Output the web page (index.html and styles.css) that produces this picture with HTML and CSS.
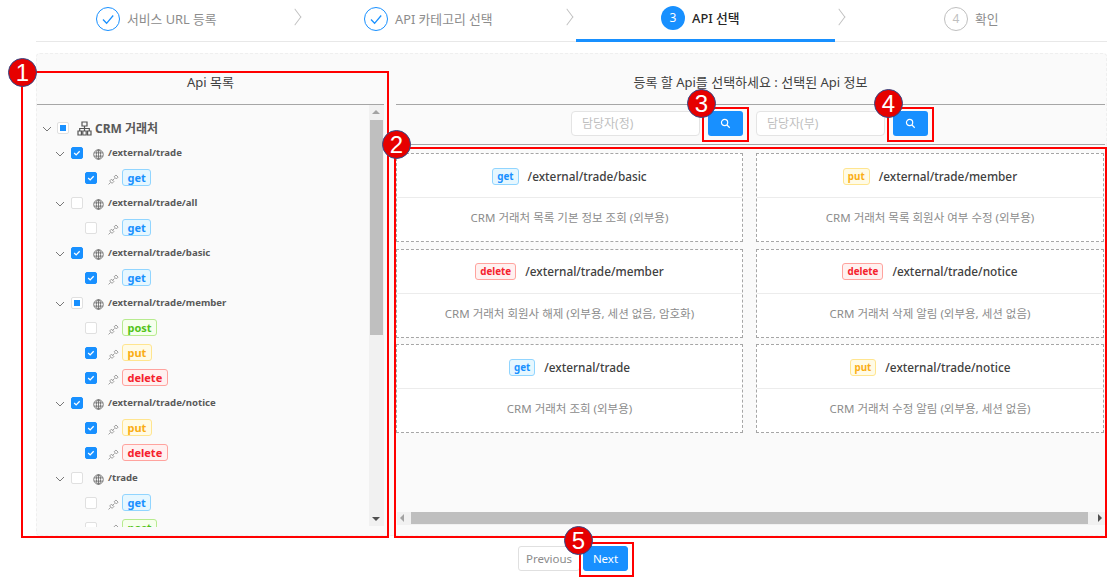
FILE: index.html
```html
<!DOCTYPE html>
<html lang="ko">
  <head>
    <meta charset="UTF-8" />
    <title>API 선택</title>
    <link rel="stylesheet" href="styles.css">
  </head>
  <body>
    <svg class="defs" width="0" height="0">
      <symbol id="i-check" viewBox="0 0 24 24"><path d="M7 12.5l3.6 3.8L17.2 8.5" fill="none" stroke="currentColor" stroke-width="1.3"/></symbol>
      <symbol id="i-arrow" viewBox="0 0 10 10"><path d="M1 3l4 4 4-4" fill="none" stroke="#777" stroke-width="1"/></symbol>
      <symbol id="i-tick" viewBox="0 0 12 12"><path d="M2.6 6l2.4 2.3 4.2-4.4" fill="none" stroke="#fff" stroke-width="1.6"/></symbol>
      <symbol id="i-tree" viewBox="0 0 15 15"><path d="M5 1h5v4H5zM1 10h3.4v4H1zM5.8 10h3.4v4H5.8zM10.6 10H14v4h-3.4zM7.5 5v5M2.7 10V7.5h9.6V10" fill="none" stroke="#555" stroke-width="1.2"/></symbol>
      <symbol id="i-globe" viewBox="0 0 12 12"><g fill="none" stroke="#666" stroke-width=".9"><circle cx="6" cy="6" r="5.2"/><ellipse cx="6" cy="6" rx="2.3" ry="5.2"/><path d="M6 1v10M1.2 4.2h9.6M1.2 7.8h9.6"/></g></symbol>
      <symbol id="i-link" viewBox="0 0 12 12"><g fill="none" stroke="#8a8a8a" stroke-width=".9" stroke-linejoin="round"><path d="M6.7 3l2-1.9 2.3 2.3-1.9 2z"/><path d="M1.8 7.6l2-2 2.6 2.6-2 2z"/><path d="M4.8 7.2l2.4-2.4M.6 11.4l2.2-2.2"/></g></symbol>
      <symbol id="i-search" viewBox="0 0 12 12"><circle cx="5" cy="5" r="3.4" fill="none" stroke="#fff" stroke-width="1.3"/><path d="M7.6 7.6l3 3" stroke="#fff" stroke-width="1.3"/></symbol>
    </svg>

    <div class="steps">
      <div class="step step-one">
        <span class="step-icon done"><svg><use href="#i-check"/></svg></span>
        <span class="step-label">서비스 URL 등록</span>
      </div>
      <span class="chev"></span>
      <div class="step step-two">
        <span class="step-icon done"><svg><use href="#i-check"/></svg></span>
        <span class="step-label">API 카테고리 선택</span>
      </div>
      <span class="chev"></span>
      <div class="step step-three active">
        <span class="step-icon current">3</span>
        <span class="step-label">API 선택</span>
      </div>
      <span class="chev"></span>
      <div class="step step-four">
        <span class="step-icon todo">4</span>
        <span class="step-label">확인</span>
      </div>
    </div>

    <div class="panel">
      <div class="col-left">
        <div class="col-title">Api 목록</div>
        <div class="tree-wrap">
          <div class="tree">
            <div class="row root"><svg class="arrow"><use href="#i-arrow"/></svg><span class="cb part"></span><svg class="ico-tree"><use href="#i-tree"/></svg><b>CRM 거래처</b></div>

            <div class="row lv1"><svg class="arrow"><use href="#i-arrow"/></svg><span class="cb on"><svg><use href="#i-tick"/></svg></span><svg class="ico-globe"><use href="#i-globe"/></svg><b>/external/trade</b></div>
            <div class="row lv2"><span class="cb on"><svg><use href="#i-tick"/></svg></span><svg class="ico-link"><use href="#i-link"/></svg><span class="tag get">get</span></div>

            <div class="row lv1"><svg class="arrow"><use href="#i-arrow"/></svg><span class="cb"></span><svg class="ico-globe"><use href="#i-globe"/></svg><b>/external/trade/all</b></div>
            <div class="row lv2"><span class="cb"></span><svg class="ico-link"><use href="#i-link"/></svg><span class="tag get">get</span></div>

            <div class="row lv1"><svg class="arrow"><use href="#i-arrow"/></svg><span class="cb on"><svg><use href="#i-tick"/></svg></span><svg class="ico-globe"><use href="#i-globe"/></svg><b>/external/trade/basic</b></div>
            <div class="row lv2"><span class="cb on"><svg><use href="#i-tick"/></svg></span><svg class="ico-link"><use href="#i-link"/></svg><span class="tag get">get</span></div>

            <div class="row lv1"><svg class="arrow"><use href="#i-arrow"/></svg><span class="cb part"></span><svg class="ico-globe"><use href="#i-globe"/></svg><b>/external/trade/member</b></div>
            <div class="row lv2"><span class="cb"></span><svg class="ico-link"><use href="#i-link"/></svg><span class="tag post">post</span></div>
            <div class="row lv2"><span class="cb on"><svg><use href="#i-tick"/></svg></span><svg class="ico-link"><use href="#i-link"/></svg><span class="tag put">put</span></div>
            <div class="row lv2"><span class="cb on"><svg><use href="#i-tick"/></svg></span><svg class="ico-link"><use href="#i-link"/></svg><span class="tag delete">delete</span></div>

            <div class="row lv1"><svg class="arrow"><use href="#i-arrow"/></svg><span class="cb on"><svg><use href="#i-tick"/></svg></span><svg class="ico-globe"><use href="#i-globe"/></svg><b>/external/trade/notice</b></div>
            <div class="row lv2"><span class="cb on"><svg><use href="#i-tick"/></svg></span><svg class="ico-link"><use href="#i-link"/></svg><span class="tag put">put</span></div>
            <div class="row lv2"><span class="cb on"><svg><use href="#i-tick"/></svg></span><svg class="ico-link"><use href="#i-link"/></svg><span class="tag delete">delete</span></div>

            <div class="row lv1"><svg class="arrow"><use href="#i-arrow"/></svg><span class="cb"></span><svg class="ico-globe"><use href="#i-globe"/></svg><b>/trade</b></div>
            <div class="row lv2"><span class="cb"></span><svg class="ico-link"><use href="#i-link"/></svg><span class="tag get">get</span></div>
            <div class="row lv2"><span class="cb"></span><svg class="ico-link"><use href="#i-link"/></svg><span class="tag post">post</span></div>
          </div>
          <div class="vbar">
            <span class="tri tri-up"></span>
            <span class="vthumb"></span>
            <span class="tri tri-down"></span>
          </div>
        </div>
      </div>

      <div class="col-right">
        <div class="col-title">등록 할 Api를 선택하세요 : 선택된 Api 정보</div>
        <div class="search-row">
          <div class="search">
            <input class="search-input" placeholder="담당자(정)" />
            <button class="search-btn"><svg><use href="#i-search"/></svg></button>
          </div>
          <div class="search">
            <input class="search-input" placeholder="담당자(부)" />
            <button class="search-btn"><svg><use href="#i-search"/></svg></button>
          </div>
        </div>
        <div class="cards">
          <div class="card">
            <div class="card-head"><span class="tag get">get</span>/external/trade/basic</div>
            <div class="card-body">CRM 거래처 목록 기본 정보 조회 (외부용)</div>
          </div>
          <div class="card">
            <div class="card-head"><span class="tag put">put</span>/external/trade/member</div>
            <div class="card-body">CRM 거래처 목록 회원사 여부 수정 (외부용)</div>
          </div>
          <div class="card">
            <div class="card-head"><span class="tag delete">delete</span>/external/trade/member</div>
            <div class="card-body">CRM 거래처 회원사 해제 (외부용, 세션 없음, 암호화)</div>
          </div>
          <div class="card">
            <div class="card-head"><span class="tag delete">delete</span>/external/trade/notice</div>
            <div class="card-body">CRM 거래처 삭제 알림 (외부용, 세션 없음)</div>
          </div>
          <div class="card">
            <div class="card-head"><span class="tag get">get</span>/external/trade</div>
            <div class="card-body">CRM 거래처 조회 (외부용)</div>
          </div>
          <div class="card">
            <div class="card-head"><span class="tag put">put</span>/external/trade/notice</div>
            <div class="card-body">CRM 거래처 수정 알림 (외부용, 세션 없음)</div>
          </div>
        </div>
        <div class="hbar">
          <span class="tri tri-left"></span>
          <span class="hthumb"></span>
          <span class="tri tri-right"></span>
        </div>
      </div>
    </div>

    <div class="actions">
      <button class="btn">Previous</button>
      <button class="btn primary">Next</button>
    </div>

    <div class="mark mark-1"></div>
    <div class="mark mark-2"></div>
    <div class="mark mark-3"></div>
    <div class="mark mark-4"></div>
    <div class="mark mark-5"></div>
    <span class="badge badge-1">1</span>
    <span class="badge badge-2">2</span>
    <span class="badge badge-3">3</span>
    <span class="badge badge-4">4</span>
    <span class="badge badge-5">5</span>
  </body>
</html>
```

FILE: styles.css
```css
* {
  box-sizing: border-box;
}
html,
body {
  margin: 0;
  height: 581px;
  overflow: hidden;
}
body {
  position: relative;
  background: #fff;
  font-family: "Noto Sans", "Noto Sans CJK KR", sans-serif;
  font-size: 12px;
  color: #595959;
}
.defs {
  position: absolute;
}

/* steps */
.steps {
  display: flex;
  align-items: stretch;
  height: 42px;
  margin-left: 36px;
  width: 1071px;
  border-bottom: 1px solid #e8e8e8;
}
.step {
  display: flex;
  align-items: center;
  gap: 7px;
  height: 41px;
  padding-bottom: 4px;
  font-size: 12.8px;
  color: #8c8c8c;
}
.step-one {
  width: 255px;
  padding-left: 60px;
}
.step-two {
  width: 259px;
  padding-left: 60px;
}
.step-three {
  width: 259px;
  padding-left: 85px;
}
.step-four {
  width: 259px;
  padding-left: 96px;
}
.step.active {
  color: #262626;
  font-weight: 500;
  height: 42px;
  border-bottom: 3px solid #1890ff;
}
.step-icon {
  display: flex;
  align-items: center;
  justify-content: center;
  width: 24px;
  height: 24px;
  border-radius: 50%;
  font-size: 12px;
  font-weight: 400;
}
.step-icon svg {
  width: 24px;
  height: 24px;
}
.done {
  border: 1px solid #1890ff;
  color: #1890ff;
}
.done svg {
  flex: none;
}
.current {
  background: #1890ff;
  color: #fff;
}
.todo {
  border: 1px solid #bfbfbf;
  color: #bfbfbf;
}
.chev {
  flex: none;
  width: 13px;
  position: relative;
}
.chev::before {
  content: "";
  position: absolute;
  left: -2px;
  top: 11px;
  width: 11px;
  height: 11px;
  border-top: 1px solid #bfbfbf;
  border-right: 1px solid #bfbfbf;
  transform: scaleX(0.75) rotate(45deg);
}

/* main panel */
.panel {
  display: flex;
  gap: 12px;
  width: 1071px;
  height: 483px;
  margin: 11px 0 0 36px;
  background: #fafafa;
  border: 1px dashed #efefef;
  border-radius: 4px;
}
.col-left {
  width: 347px;
  flex: none;
}
.col-right {
  width: 709px;
  flex: none;
}
.col-title {
  height: 51px;
  padding-top: 19px;
  line-height: 18px;
  text-align: center;
  color: #404040;
  font-size: 13px;
  border-bottom: 1px solid #a6a6a6;
}

/* tree */
.tree-wrap {
  display: flex;
  height: 422px;
}
.tree {
  flex: 1;
  height: 422px;
  overflow: hidden;
  padding-top: 10px;
}
.row {
  display: flex;
  align-items: center;
  height: 25px;
}
.row b {
  font-size: 9.6px;
  font-weight: 700;
  color: #595959;
  margin-left: 4px;
}
.root b {
  font-size: 12px;
  margin-left: 3px;
}
.root {
  padding-left: 5px;
}
.lv1 {
  padding-left: 18px;
}
.lv2 {
  padding-left: 48px;
}
.arrow {
  width: 10px;
  height: 10px;
  flex: none;
  margin-top: 3px;
  margin-right: 5px;
}
.lv1 .arrow {
  margin-right: 6px;
}
.cb {
  display: flex;
  align-items: center;
  justify-content: center;
  flex: none;
  width: 12px;
  height: 12px;
  background: #fff;
  border: 1px solid #e0e0e0;
  border-radius: 2px;
}
.cb svg {
  width: 12px;
  height: 12px;
}
.cb.on {
  background: #1890ff;
  border-color: #1890ff;
}
.cb.part::after {
  content: "";
  width: 6px;
  height: 6px;
  background: #1890ff;
}
.ico-tree {
  flex: none;
  width: 15px;
  height: 15px;
  margin-left: 8px;
  margin-top: 2px;
}
.ico-globe {
  flex: none;
  width: 11px;
  height: 11px;
  margin-left: 10px;
  margin-top: 4px;
}
.ico-link {
  flex: none;
  width: 11px;
  height: 11px;
  margin-left: 11px;
  margin-top: 4px;
  margin-right: 3px;
}
.tag {
  display: inline-block;
  height: 17px;
  padding: 0 4.5px;
  line-height: 15px;
  font-size: 11px;
  font-weight: 700;
  border: 1px solid;
  border-radius: 3px;
}
.get {
  color: #1890ff;
  background: #e6f7ff;
  border-color: #91d5ff;
}
.put {
  color: #faad14;
  background: #fffbe6;
  border-color: #ffe58f;
}
.post {
  color: #52c41a;
  background: #f6ffed;
  border-color: #b7eb8f;
}
.delete {
  color: #f5222d;
  background: #fff1f0;
  border-color: #ffa39e;
}

/* scroll bars */
.vbar {
  position: relative;
  flex: none;
  width: 15px;
  height: 421px;
  background: #f1f1f1;
}
.vthumb {
  position: absolute;
  left: 1px;
  top: 15px;
  width: 13px;
  height: 215px;
  background: #bfbfbf;
}
.tri {
  position: absolute;
  width: 0;
  height: 0;
  border: 4px solid transparent;
}
.tri-up {
  left: 3px;
  top: 1px;
  border-bottom-color: #a3a3a3;
}
.tri-down {
  left: 3px;
  bottom: 1px;
  border-top-color: #505050;
}
.hbar {
  position: relative;
  height: 13px;
  margin: 79px 0 0 1px;
  background: #f1f1f1;
}
.hthumb {
  position: absolute;
  left: 14px;
  top: 0;
  width: 677px;
  height: 12px;
  background: #bfbfbf;
}
.tri-left {
  left: -1px;
  top: 2px;
  border-right-color: #a3a3a3;
}
.tri-right {
  right: -1px;
  top: 2px;
  border-left-color: #505050;
}

/* search */
.search-row {
  display: flex;
  justify-content: flex-start;
  gap: 13px;
  height: 40px;
  padding: 6px 0 0 175px;
  border-bottom: 1px solid #a6a6a6;
}
.search {
  display: flex;
  gap: 8px;
}
.search-input {
  width: 129px;
  height: 25px;
  padding: 0 10px;
  background: #fff;
  border: 1px solid #e4e4e4;
  border-radius: 4px;
  font: 12px "Noto Sans", "Noto Sans CJK KR", sans-serif;
}
.search-input::placeholder {
  color: #bfbfbf;
}
.search-btn {
  display: flex;
  align-items: center;
  justify-content: center;
  width: 35px;
  height: 25px;
  padding: 0;
  background: #1890ff;
  border: none;
  border-radius: 3px;
}
.search-btn svg {
  width: 11px;
  height: 11px;
}

/* cards */
.cards {
  display: grid;
  grid-template-columns: 347px 348px;
  grid-auto-rows: 89px;
  column-gap: 13px;
  row-gap: 6.6px;
  margin-top: 8px;
}
.card {
  background: #fff;
  border: 1px dashed #a6a6a6;
}
.card-head {
  display: flex;
  align-items: center;
  justify-content: center;
  gap: 9px;
  height: 44px;
  border-bottom: 1px solid #ececec;
  font-size: 11.8px;
  font-weight: 500;
  color: #404040;
}
.card-head .tag {
  font-size: 9.8px;
  margin-top: 1px;
  padding: 0 4px;
}
.card-body {
  height: 39px;
  line-height: 39px;
  text-align: center;
  font-size: 11.5px;
  color: #8c8c8c;
}

/* bottom buttons */
.actions {
  display: flex;
  justify-content: center;
  gap: 3px;
  margin-top: 10px;
  padding-left: 34px;
}
.btn {
  height: 25px;
  padding: 0;
  width: 62px;
  background: #fff;
  border: 1px solid #e0e0e0;
  border-radius: 3px;
  font: 11.5px "Noto Sans", "Noto Sans CJK KR", sans-serif;
  color: #8c8c8c;
}
.primary {
  width: 45px;
  background: #1890ff;
  border-color: #1890ff;
  color: #fff;
}

/* red annotation overlays */
.mark {
  position: absolute;
  border: 2px solid #f00;
}
.mark-1 {
  left: 21px;
  top: 71px;
  width: 368px;
  height: 467px;
}
.mark-2 {
  left: 394px;
  top: 147px;
  width: 713px;
  height: 391px;
}
.mark-3 {
  left: 702px;
  top: 107px;
  width: 47px;
  height: 35px;
}
.mark-4 {
  left: 887px;
  top: 107px;
  width: 47px;
  height: 35px;
}
.mark-5 {
  left: 579px;
  top: 542px;
  width: 55px;
  height: 35px;
}
.badge {
  position: absolute;
  display: flex;
  align-items: center;
  justify-content: center;
  width: 29px;
  height: 29px;
  background: #e60000;
  border: 1px solid #2f4a8a;
  border-radius: 50%;
  font-family: "Liberation Sans", sans-serif;
  font-size: 24px;
  color: #fff;
}
.badge-1 {
  left: 8px;
  top: 58px;
}
.badge-2 {
  left: 382px;
  top: 130px;
}
.badge-3 {
  left: 687px;
  top: 89px;
}
.badge-4 {
  left: 874px;
  top: 89px;
}
.badge-5 {
  left: 564px;
  top: 526px;
}
```
